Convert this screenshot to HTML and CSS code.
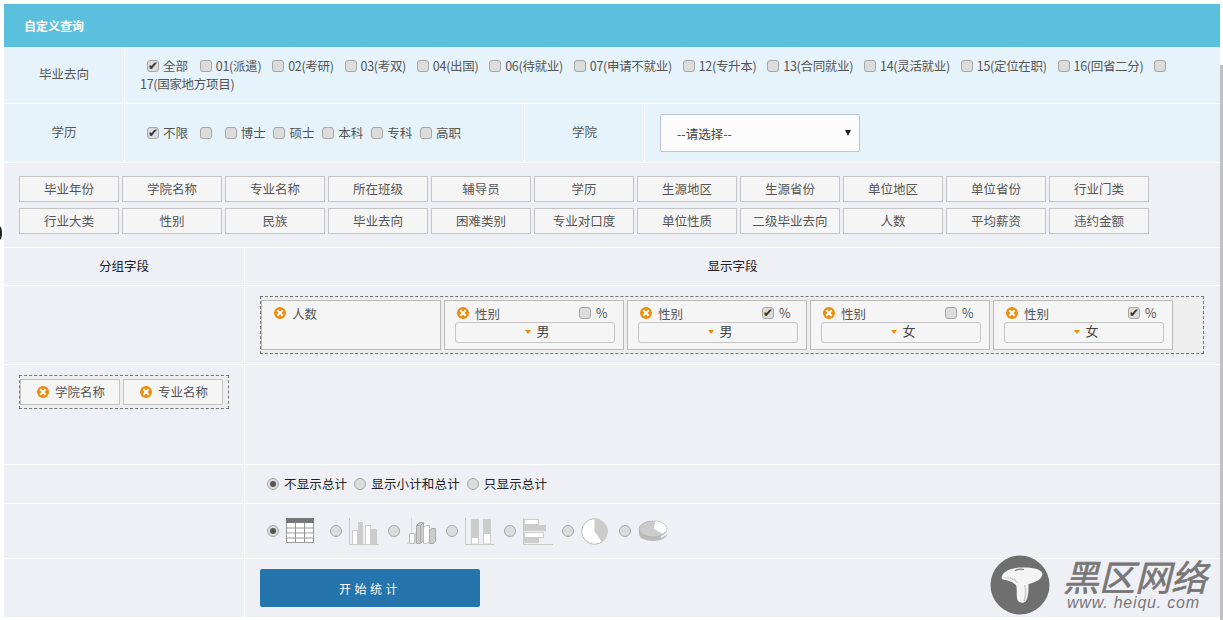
FILE: index.html
```html
<!DOCTYPE html>
<html lang="zh-CN">
<head>
<meta charset="utf-8">
<title>自定义查询</title>
<link rel="stylesheet" href="styles.css">
</head>
<body>
<svg class="defs" width="0" height="0" aria-hidden="true">
  <symbol id="del" viewBox="0 0 12 12">
    <circle cx="6" cy="6" r="6" fill="#ef8c0c"/>
    <path d="M4 4l4 4M8 4l-4 4" stroke="#fff" stroke-width="2" stroke-linecap="square"/>
  </symbol>
</svg>
<main class="panel">
  <header class="title">自定义查询</header>

  <section class="info-row">
    <div class="info-label">毕业去向</div>
    <div class="info-value wrap">
      <input type="checkbox" checked><span class="all">全部</span>
      <input type="checkbox"><span>01(派遣)</span>
      <input type="checkbox"><span>02(考研)</span>
      <input type="checkbox"><span>03(考双)</span>
      <input type="checkbox"><span>04(出国)</span>
      <input type="checkbox"><span>06(待就业)</span>
      <input type="checkbox"><span>07(申请不就业)</span>
      <input type="checkbox"><span>12(专升本)</span>
      <input type="checkbox"><span>13(合同就业)</span>
      <input type="checkbox"><span>14(灵活就业)</span>
      <input type="checkbox"><span>15(定位在职)</span>
      <input type="checkbox"><span>16(回省二分)</span>
      <input type="checkbox"><span>17(国家地方项目)</span>
    </div>
  </section>

  <section class="info-row edu-row">
    <div class="info-label">学历</div>
    <div class="info-value edu">
      <input type="checkbox" checked><span>不限</span>
      <input type="checkbox" class="after-first"><span class="blank"></span>
      <input type="checkbox"><span>博士</span>
      <input type="checkbox"><span>硕士</span>
      <input type="checkbox"><span>本科</span>
      <input type="checkbox"><span>专科</span>
      <input type="checkbox"><span>高职</span>
    </div>
    <div class="info-label">学院</div>
    <div class="info-value college">
      <div class="select-box">
        <select><option>--请选择--</option></select>
      </div>
    </div>
  </section>

  <section class="fields">
    <div class="chip">毕业年份</div><div class="chip">学院名称</div><div class="chip">专业名称</div><div class="chip">所在班级</div><div class="chip">辅导员</div><div class="chip">学历</div><div class="chip">生源地区</div><div class="chip">生源省份</div><div class="chip">单位地区</div><div class="chip">单位省份</div><div class="chip">行业门类</div>
    <div class="chip">行业大类</div><div class="chip">性别</div><div class="chip">民族</div><div class="chip">毕业去向</div><div class="chip">困难类别</div><div class="chip">专业对口度</div><div class="chip">单位性质</div><div class="chip">二级毕业去向</div><div class="chip">人数</div><div class="chip">平均薪资</div><div class="chip">违约金额</div>
  </section>

  <section class="grid-row head-row">
    <div class="side head">分组字段</div>
    <div class="head">显示字段</div>
  </section>

  <section class="grid-row display-row">
    <div class="side"></div>
    <div class="display-cell">
      <div class="dropzone display-zone">
        <div class="card">
          <div class="card-top"><svg class="del"><use href="#del"/></svg><span>人数</span></div>
        </div>
        <div class="card">
          <div class="card-top"><svg class="del"><use href="#del"/></svg><span class="grow">性别</span><input type="checkbox"><span class="pct">%</span></div>
          <div class="mini-select"><i class="caret"></i><span>男</span></div>
        </div>
        <div class="card">
          <div class="card-top"><svg class="del"><use href="#del"/></svg><span class="grow">性别</span><input type="checkbox" checked><span class="pct">%</span></div>
          <div class="mini-select"><i class="caret"></i><span>男</span></div>
        </div>
        <div class="card">
          <div class="card-top"><svg class="del"><use href="#del"/></svg><span class="grow">性别</span><input type="checkbox"><span class="pct">%</span></div>
          <div class="mini-select"><i class="caret"></i><span>女</span></div>
        </div>
        <div class="card">
          <div class="card-top"><svg class="del"><use href="#del"/></svg><span class="grow">性别</span><input type="checkbox" checked><span class="pct">%</span></div>
          <div class="mini-select"><i class="caret"></i><span>女</span></div>
        </div>
      </div>
    </div>
  </section>

  <section class="grid-row group-row">
    <div class="side group-cell">
      <div class="dropzone group-zone">
        <div class="chip group-chip"><svg class="del"><use href="#del"/></svg><span>学院名称</span></div>
        <div class="chip group-chip"><svg class="del"><use href="#del"/></svg><span>专业名称</span></div>
      </div>
    </div>
    <div></div>
  </section>

  <section class="grid-row total-row">
    <div class="side"></div>
    <div class="total-options">
      <input type="radio" name="total" checked><span>不显示总计</span>
      <input type="radio" name="total"><span>显示小计和总计</span>
      <input type="radio" name="total"><span>只显示总计</span>
    </div>
  </section>

  <section class="grid-row chart-row">
    <div class="side"></div>
    <div class="chart-options">
      <input type="radio" name="chart" checked>
      <svg class="chart table-icon" width="28" height="26" viewBox="0 0 28 26">
        <rect x=".5" y=".5" width="27" height="24" fill="#fff" stroke="#999"/>
        <rect x="0" y="0" width="28" height="5" fill="#777"/>
        <path d="M0 10h28M0 15h28M0 20h28M9.500 5v20M18.500 5v20" stroke="#999" fill="none"/>
      </svg>
      <input type="radio" name="chart">
      <svg class="chart" width="30" height="27" viewBox="0 0 30 27">
        <path d="M.5 0v26.500H30" fill="none" stroke="#c8c8c8"/>
        <rect x="3.500" y="12.500" width="5" height="14" fill="#fff" stroke="#ccc"/>
        <rect x="9" y="4" width="5" height="22" fill="#ccc"/>
        <rect x="16.500" y="7.500" width="5" height="19" fill="#fff" stroke="#ccc"/>
        <rect x="22" y="11" width="6" height="15" fill="#ccc"/>
      </svg>
      <input type="radio" name="chart">
      <svg class="chart" width="30" height="27" viewBox="0 0 30 27">
        <path d="M4.500 0v21L0 26M4 21h26" fill="none" stroke="#d8d8d8"/>
        <path d="M2.500 15.500h5v10h-5z" fill="#fff" stroke="#bbb"/>
        <path d="M7.500 15.500l2-2v10l-2 2z" fill="#ccc"/>
        <path d="M9.500 7.500l3-3h4v18l-3 3h-4z" fill="#ccc" stroke="#aaa"/>
        <path d="M9.500 7.500h4v18M13.500 7.500l3-3" fill="none" stroke="#aaa"/>
        <path d="M16.500 9.500l3-2h3v16l-3 2h-3z" fill="#fff" stroke="#bbb"/>
        <path d="M22.500 12.500l2-2h4v13l-2 2h-4z" fill="#ccc" stroke="#aaa"/>
      </svg>
      <input type="radio" name="chart">
      <svg class="chart" width="30" height="27" viewBox="0 0 30 27">
        <path d="M.5 0v26.500H29" fill="none" stroke="#c8c8c8"/>
        <rect x="6" y="1" width="8" height="18" fill="#ccc"/>
        <rect x="6.500" y="19.500" width="7" height="6.500" fill="#fff" stroke="#ccc"/>
        <rect x="18" y="1" width="8" height="14" fill="#ccc"/>
        <rect x="18.500" y="15.500" width="7" height="10.500" fill="#fff" stroke="#ccc"/>
      </svg>
      <input type="radio" name="chart">
      <svg class="chart" width="30" height="27" viewBox="0 0 30 27">
        <path d="M.5 0v26.500H30" fill="none" stroke="#c8c8c8"/>
        <rect x="1.500" y="1.500" width="14" height="5" fill="#fff" stroke="#ccc"/>
        <rect x="1" y="7" width="22" height="6" fill="#ccc"/>
        <rect x="1.500" y="14.500" width="19" height="5" fill="#fff" stroke="#ccc"/>
        <rect x="1" y="20" width="15" height="5" fill="#ccc"/>
      </svg>
      <input type="radio" name="chart">
      <svg class="chart pie" width="27" height="27" viewBox="0 0 27 27">
        <circle cx="13.500" cy="13.500" r="12.800" fill="#fff" stroke="#bbb"/>
        <path d="M13.500 13.500V.7A12.800 12.800 0 0 1 21 24z" fill="#ccc"/>
      </svg>
      <input type="radio" name="chart">
      <svg class="chart" width="30" height="24" viewBox="0 0 30 24">
        <path d="M1 10v5c0 4 6 7 14 7s14-3 14-7v-5z" fill="#bbb"/>
        <path d="M23 19c3-1 6-3 6-5v-4h-6z" fill="#eee"/>
        <ellipse cx="15" cy="10" rx="14" ry="8" fill="#ccc" stroke="#aaa" stroke-width=".6"/>
        <path d="M15 10l2-8c7 0 12 4 12 8 0 2-2 4-5 5z" fill="#fff" stroke="#bbb" stroke-width=".6"/>
      </svg>
    </div>
  </section>

  <section class="grid-row submit-row">
    <div class="side"></div>
    <div class="submit-cell"><button class="start" type="button">开始统计</button></div>
  </section>
</main>

<div class="edge-mark"></div>
<div class="scroll-thumb"></div>

<div class="watermark">
  <svg class="mushroom" width="60" height="60" viewBox="0 0 60 60">
    <circle cx="30" cy="30" r="29.500" fill="#6f6f6f"/>
    <path d="M12 21C14 15 24 12.500 32 12.500C42 12 52 14 52.500 19C52 25 44 27.500 38.500 29C38.500 35 38.500 42 36 46C34 48.500 29 48.500 27.500 45C26 40 27.500 34 26 30C22 26 16 25 13 24.500C11.500 24 11.500 22 12 21Z" fill="#f4f4f4"/>
    <path d="M25 15.500c3-1.500 6-1.500 9-1" fill="none" stroke="#777" stroke-width="1.200"/>
    <path d="M15 23c4-1 9 1 13 5M20 22l3 3M24 23l2 3" fill="none" stroke="#bbb" stroke-width=".8"/>
    <path d="M35 30c1 6 1 11-1 16" fill="none" stroke="#ccc" stroke-width="1.500"/>
  </svg>
  <div class="mark-text">
    <div class="mark-cn">黑区网络</div>
    <div class="mark-en">www. heiqu. com</div>
  </div>
</div>
</body>
</html>
```
FILE: styles.css
```css
* { box-sizing: border-box; }
html, body { margin: 0; padding: 0; height: 620px; overflow: hidden; background: #fff; }
body {
  position: relative;
  padding: 4px 3px 0 4px;
  font-family: "Noto Sans CJK SC", "Noto Sans", sans-serif;
  font-size: 12.5px;
  color: #555;
}
.defs { position: absolute; }
.panel { background: #eff0f5; }

.title {
  height: 43px;
  padding-left: 20px;
  background: #5bc0de;
  color: #fff;
  font-size: 12px;
  font-weight: 700;
  line-height: 44px;
}

input[type="checkbox"], input[type="radio"] {
  appearance: none;
  position: relative;
  width: 12px;
  height: 12px;
  margin: 0 4px 0 8px;
  vertical-align: -1px;
  background: #dcdcdc;
  border: 1px solid #a6a6a6;
  border-radius: 3px;
}
input[type="checkbox"]:checked::after {
  content: "✔";
  position: absolute;
  left: 0;
  top: -2px;
  width: 10px;
  font: 12px/14px "DejaVu Sans", sans-serif;
  color: #333;
  text-align: center;
}
input[type="radio"] { border-radius: 50%; }
input[type="radio"]:checked::after {
  content: "";
  position: absolute;
  left: 2px;
  top: 2px;
  width: 6px;
  height: 6px;
  border-radius: 50%;
  background: #555;
}

.info-row {
  display: grid;
  grid-template-columns: 121px 1fr;
  height: 57px;
  background: #e7f3fa;
  border-bottom: 1px solid #fff;
}
.edu-row { grid-template-columns: 121px 400px 120px 1fr; height: 59px; }
.info-label {
  display: flex;
  align-items: center;
  justify-content: center;
  border-right: 1px solid #fff;
  padding-bottom: 3px;
}
.info-value { line-height: 18px; }
.wrap { padding: 10px 30px 0 15px; }
.wrap span { white-space: nowrap; letter-spacing: -.3px; }
.wrap .all { letter-spacing: 0; margin-right: 1px; }
.wrap input:first-child, .edu input:first-child { margin-left: 7px; }
.edu { display: block; padding: 20px 0 0 15px; border-right: 1px solid #fff; }
.edu input { margin-left: 5px; }
.edu input.after-first { margin-left: 9px; }
.blank { display: inline-block; width: 1px; }
.college { padding: 10px 0 0 15px; }

.select-box { position: relative; width: 200px; }
.select-box::after {
  content: "";
  position: absolute;
  right: 9px;
  top: 16px;
  border: 3px solid transparent;
  border-top: 6px solid #222;
  border-bottom: 0;
}
.select-box select {
  appearance: none;
  display: block;
  width: 100%;
  height: 38px;
  padding: 2px 0 0 16px;
  background: #fcfcfc;
  border: 1px solid #bcc5d6;
  border-radius: 2px;
  font: inherit;
  color: #444;
}

.fields {
  display: flex;
  flex-wrap: wrap;
  align-content: flex-start;
  gap: 6px 3px;
  height: 85px;
  padding: 13px 68px 0 15px;
  border-bottom: 1px solid #fff;
}
.chip {
  display: flex;
  align-items: center;
  justify-content: center;
  width: 100px;
  height: 26px;
  padding-bottom: 1px;
  background: #f5f5f5;
  border: 1px solid #c4c4c4;
}
.group-chip { padding-left: 2px; }

.grid-row {
  display: grid;
  grid-template-columns: 241px 1fr;
  border-bottom: 1px solid #fff;
}
.side { border-right: 1px solid #fff; }
.head-row { height: 38px; }
.head { display: flex; align-items: center; justify-content: center; padding-bottom: 3px; color: #222; }
.display-row { height: 79px; }
.group-row { height: 100px; }
.total-row { height: 39px; }
.chart-row { height: 55px; }
.submit-row { height: 58px; border-bottom: 0; }

.display-cell { padding: 10px 0 0 15px; }
.dropzone { background: #eee; border: 1px dashed #777; }
.display-zone {
  display: flex;
  gap: 3px;
  width: 944px;
  height: 58px;
  padding-top: 3px;
}
.card {
  width: 180px;
  height: 50px;
  padding: 4px 8px 0 10px;
  background: #f5f5f5;
  border: 1px solid #bbb;
}
.card-top { display: flex; align-items: center; height: 17px; padding: 0 7px 1px 2px; }
.card-top .grow { flex: 1; }
.del { flex: none; width: 12px; height: 12px; margin-right: 6px; }
.card-top input { margin: 0 5px 0 0; }
.pct { width: 12px; margin-bottom: 2px; }
.mini-select {
  display: flex;
  align-items: center;
  justify-content: center;
  gap: 5px;
  height: 21px;
  padding: 0 0 4px 5px;
  font-size: 13px;
  color: #444;
  border: 1px solid #c4c4c4;
  border-radius: 3px;
}
.caret {
  margin-top: 2px;
  border: 3.5px solid transparent;
  border-top: 4px solid #ef8c0c;
  border-bottom: 0;
}

.group-cell { padding: 10px 0 0 15px; }
.group-zone {
  display: flex;
  gap: 3px;
  width: 210px;
  height: 34px;
  padding-top: 3px;
}

.total-options {
  display: flex;
  align-items: center;
  padding: 0 0 1px 15px;
  color: #222;
  letter-spacing: .15px;
}
.total-options input { margin: 1px 5px 0 7px; flex: none; }

.chart-options {
  display: flex;
  align-items: center;
  padding-left: 22px;
}
.chart-options input { flex: none; margin: 0 7px 0 0; }
.chart { flex: none; margin-right: 9px; }
.table-icon { margin-right: 16px; }
.pie { margin-right: 11px; }

.submit-cell { padding: 10px 0 0 15px; }
.start {
  width: 220px;
  height: 38px;
  background: #2574ab;
  border: 0;
  border-radius: 2px;
  color: #fff;
  font: 12px "Noto Sans CJK SC", sans-serif;
  letter-spacing: 3.5px;
}

.scroll-thumb {
  position: absolute;
  top: 65px;
  right: 0;
  bottom: 0;
  width: 3px;
  background: #c1c1c1;
}
.edge-mark {
  position: absolute;
  left: -3px;
  top: 226px;
  width: 5px;
  height: 14px;
  border-radius: 50%;
  background: #222;
}

.watermark {
  position: absolute;
  left: 990px;
  top: 555px;
  display: flex;
  gap: 13px;
}
.mark-text { color: #777; }
.mark-cn {
  font-size: 36px;
  font-style: italic;
  font-weight: 400;
  line-height: 38px;
  margin-top: 1px;
  -webkit-text-stroke: .6px #777;
}
.mark-en {
  font-family: "Liberation Sans", sans-serif;
  font-size: 16px;
  font-style: italic;
  line-height: 18px;
  letter-spacing: .8px;
  margin-left: 4px;
}
```
